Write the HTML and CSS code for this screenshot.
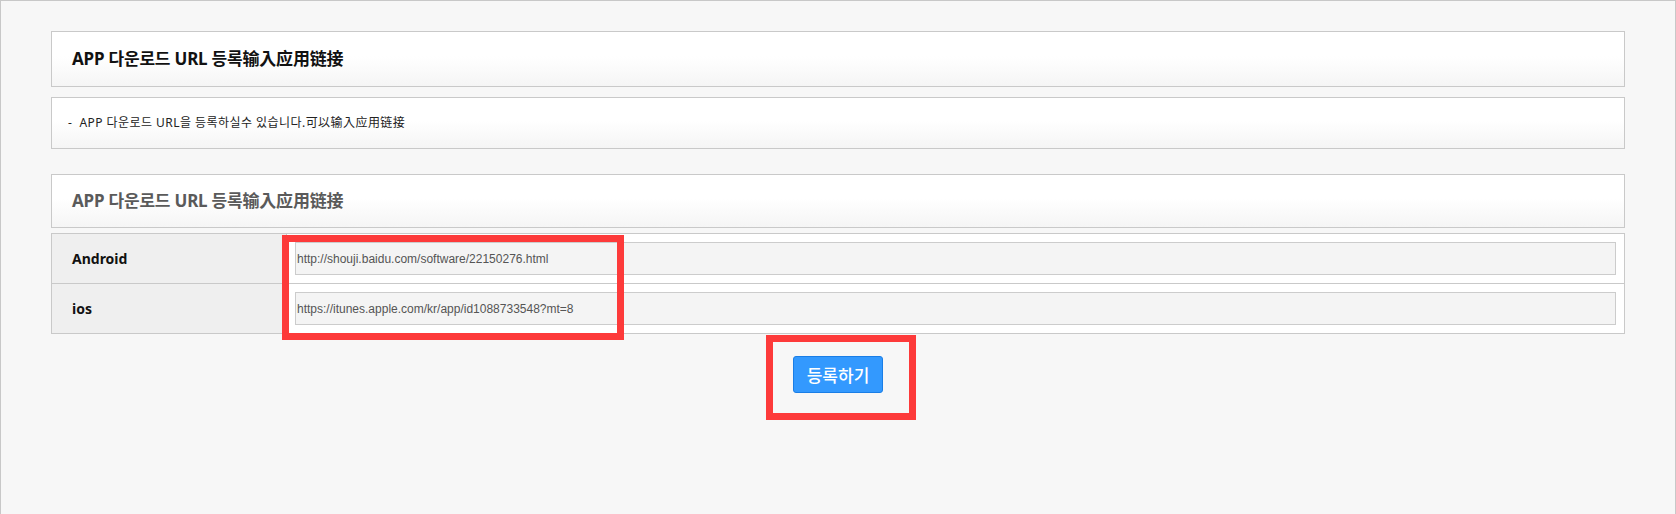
FILE: index.html
```html
<!DOCTYPE html>
<html lang="ko">
<head>
<meta charset="utf-8">
<title>APP 다운로드 URL 등록</title>
<link rel="stylesheet" href="styles.css">
</head>
<body>
<div class="frame">
  <div class="panel head"><h2 class="head-title">APP 다운로드 URL 등록输入应用链接</h2></div>
  <div class="panel note"><p class="note-text">-&nbsp; APP 다운로드 URL을 등록하실수 있습니다.可以输入应用链接</p></div>
  <div class="panel sect"><h3 class="sect-title">APP 다운로드 URL 등록输入应用链接</h3></div>
  <div class="form">
    <div class="label">Android</div>
    <div class="value"><input class="field" type="text" value="http://shouji.baidu.com/software/22150276.html"></div>
    <div class="label">ios</div>
    <div class="value"><input class="field" type="text" value="https://itunes.apple.com/kr/app/id1088733548?mt=8"></div>
  </div>
  <div class="actions"><button class="btn" type="button">등록하기</button></div>
  <span class="mark mark-fields"></span>
  <span class="mark mark-button"></span>
</div>
</body>
</html>
```
FILE: styles.css
```css
* { box-sizing: border-box; }
html, body { margin: 0; padding: 0; background: #f7f7f7; }
body {
  font-family: "Noto Sans", "Noto Sans CJK KR", sans-serif;
  color: #222;
}
.frame {
  position: relative;
  min-height: 514px;
  border: 1px solid #c8c8c8;
  border-bottom: 0;
  background: #f7f7f7;
  padding: 30px 50px 0;
}
.panel {
  display: flex;
  align-items: center;
  border: 1px solid #c9c9c9;
  background: linear-gradient(to bottom, #ffffff 0%, #ffffff 45%, #f5f5f5 100%);
}
.head { height: 56px; padding: 0 20px; }
.note { height: 52px; margin-top: 10px; padding: 0 16px; }
.sect { height: 54px; margin-top: 25px; padding: 0 20px; }
.head-title, .sect-title {
  margin: 0;
  font-size: 17px;
  font-weight: 700;
  line-height: 20px;
  letter-spacing: -0.2px;
}
.head-title { color: #111; }
.sect-title { color: #5a5a5a; }
.note-text {
  margin: 0;
  font-size: 12px;
  line-height: 16px;
  letter-spacing: 0.45px;
  color: #222;
}
.form {
  margin-top: 5px;
  display: grid;
  grid-template-columns: 235px 1fr;
  border: 1px solid #c9c9c9;
  border-bottom: 0;
  background: #fff;
}
.label {
  display: flex;
  align-items: center;
  padding-left: 20px;
  background: #efefef;
  border-right: 1px solid #c9c9c9;
  border-bottom: 1px solid #c9c9c9;
  font-size: 14px;
  font-weight: 700;
  color: #111;
}
.value {
  padding: 8px;
  border-bottom: 1px solid #c9c9c9;
}
.field {
  display: block;
  width: 100%;
  height: 33px;
  margin: 0;
  padding: 0 1px;
  border: 1px solid #cccccc;
  background: #f4f4f4;
  font-family: "Liberation Sans", Arial, sans-serif;
  font-size: 12px;
  color: #555;
  outline: none;
}
.actions {
  display: flex;
  justify-content: center;
  margin-top: 22px;
}
.btn {
  width: 90px;
  height: 37px;
  padding: 0;
  border: 1px solid #1a7ee6;
  border-radius: 3px;
  background: #3399fe;
  color: #fff;
  font-family: "Noto Sans CJK KR", sans-serif;
  font-size: 17px;
  font-weight: 500;
  cursor: pointer;
}
.mark {
  position: absolute;
  border: 7px solid #fd3a3a;
  pointer-events: none;
}
.mark-fields { left: 281px; top: 234px; width: 342px; height: 105px; }
.mark-button { left: 765px; top: 334px; width: 150px; height: 85px; }
```
